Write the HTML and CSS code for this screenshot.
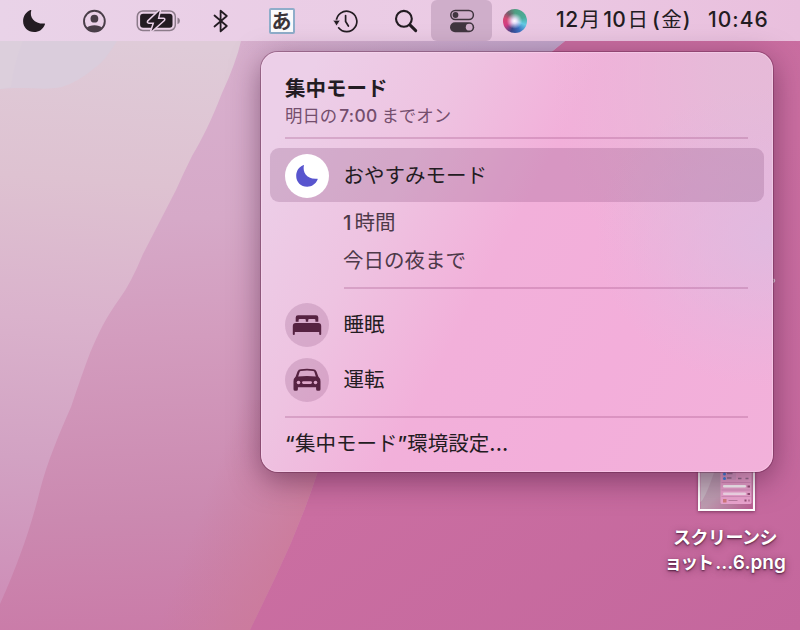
FILE: index.html
```html
<!DOCTYPE html>
<html lang="ja">
<head>
    <meta charset="UTF-8">

    <title>集中モード</title>

    <link rel="stylesheet" href="styles.css">
</head>
<body>
    <div id="desktop">
        <svg class="wallpaper" width="800" height="630" viewBox="0 0 800 630">
            <defs>
                <linearGradient id="base" x1="0" y1="0" x2="1" y2="1">
                    <stop offset="0" stop-color="#c56b9e"/>
                    <stop offset=".6" stop-color="#ca6ea1"/>
                    <stop offset="1" stop-color="#c4679d"/>
                </linearGradient>
                <linearGradient id="mid" gradientUnits="userSpaceOnUse" x1="200" y1="41" x2="230" y2="630">
                    <stop offset="0" stop-color="#d8b0ce"/>
                    <stop offset=".3" stop-color="#d6a9c8"/>
                    <stop offset=".5" stop-color="#d39cbe"/>
                    <stop offset=".8" stop-color="#cb89b0"/>
                    <stop offset="1" stop-color="#ca7ba8"/>
                </linearGradient>
                <linearGradient id="midTop" gradientUnits="userSpaceOnUse" x1="240" y1="0" x2="560" y2="0">
                    <stop offset="0" stop-color="#c0a5ca" stop-opacity="0"/>
                    <stop offset="1" stop-color="#c0a5ca"/>
                </linearGradient>
                <linearGradient id="warm" gradientUnits="userSpaceOnUse" x1="195" y1="525" x2="290" y2="560">
                    <stop offset="0" stop-color="#cc7b9a" stop-opacity="0"/>
                    <stop offset="1" stop-color="#cc7b9a" stop-opacity=".85"/>
                </linearGradient>
                <linearGradient id="left" gradientUnits="userSpaceOnUse" x1="100" y1="41" x2="60" y2="600">
                    <stop offset="0" stop-color="#dfcbd8"/>
                    <stop offset=".25" stop-color="#dec2d1"/>
                    <stop offset=".5" stop-color="#dab2cc"/>
                    <stop offset=".75" stop-color="#d2a2c3"/>
                    <stop offset="1" stop-color="#ce8fb8"/>
                </linearGradient>
            </defs>
            <rect width="800" height="630" fill="url(#base)"/>
            <path fill="url(#mid)" d="M0 0H605L565 41C450 130 370 330 317 474Q300 526 275 578L250 630H0Z"/>
            <path fill="url(#warm)" d="M0 400H344L317 474Q300 526 275 578L250 630H0Z"/>
            <path fill="url(#midTop)" d="M240 0H605L565 41L550 53H240Z"/>
            <path fill="url(#left)" d="M0 0H249L241 41Q236 63 222 93C212 119 202 139 192 156Q184 172 176 190L143 254Q131 283 120 298C105 319 99 332 90 353Q82 374 71 407C60 432 47 462 40 490C31 527 18 564 0 604Z"/>
            <path fill="#dacddc" d="M0 0H150L117 41Q105 61 96 67Q78 82 62 87C43 91 25 86 0 89Z"/>
            <path fill="#dccfdc" d="M0 0H26L23 41Q14 63 11 87L0 89Z"/>
        </svg>

        <div class="menubar">
            <span class="item">
                <svg width="24" height="24" viewBox="0 0 24 24"><path fill="#231c22" d="M9.3 1.2C7.2 8.400 12.200 15 22.600 14.600C23 14.600 23.100 15 22.900 15.400C20.900 20.400 17 23 12.200 23C5.900 23 1.100 18.300 1.100 12.200C1.100 7.100 4.200 2.800 8.500 1.100C9 .9 9.400 .8 9.300 1.200Z"/></svg>
            </span>
            <span class="item">
                <svg width="24" height="24" viewBox="0 0 24 24">
                    <circle cx="12.400" cy="12.200" r="10.400" fill="none" stroke="#493e48" stroke-width="1.900"/>
                    <circle cx="12.400" cy="9.700" r="3.900" fill="#493e48"/>
                    <path fill="#493e48" d="M4.700 18.800C7.200 15.300 17.600 15.300 20.100 18.800C16.700 23.700 8.100 23.700 4.700 18.800Z"/>
                </svg>
            </span>
            <span class="item">
                <svg width="44" height="24" viewBox="0 0 44 24">
                    <rect x="1.300" y="2" width="38" height="19.500" rx="5.500" fill="none" stroke="#8c7b8a" stroke-width="1.500"/>
                    <rect x="4.100" y="4.800" width="32.400" height="13.900" rx="3" fill="#231c22"/>
                    <path fill="#8c7b8a" d="M41.500 8.500Q44 9.500 44 11.800T41.500 15.200Z"/>
                    <path fill="#231c22" stroke="#e9d0e7" stroke-width="3" stroke-linejoin="round" paint-order="stroke" d="M23.700 1.500L12.300 12.400Q11.800 13.400 12.800 13.400H18.300L15.500 22L27.900 10.900Q28.400 9.900 27.400 9.900H21.700Z"/>
                </svg>
            </span>
            <span class="item">
                <svg width="16" height="24" viewBox="0 0 16 24"><path fill="none" stroke="#231c22" stroke-width="1.800" stroke-linejoin="round" stroke-linecap="round" d="M1.500 6.500L13.800 17L7.600 22.300V1.700L13.800 7L1.500 17.500"/></svg>
            </span>
            <span class="item"><span class="ime">あ</span></span>
            <span class="item">
                <svg width="26" height="24" viewBox="0 0 26 24">
                    <path fill="none" stroke="#231c22" stroke-width="1.700" stroke-linecap="round" d="M3.400 12.300A10.200 10.200 0 1 1 5.600 18.800M12.600 6.500V12.500L15.400 17"/>
                    <path fill="#231c22" stroke="#e9cde5" stroke-width=".8" d="M.5 11.200Q-.2 11.200 .4 12L3 16.200Q3.600 16.800 4.100 16.200L6.800 12Q7.300 11.200 6.600 11.200Z"/>
                </svg>
            </span>
            <span class="item">
                <svg width="24" height="24" viewBox="0 0 24 24">
                    <circle cx="9.900" cy="9.800" r="7.900" fill="none" stroke="#231c22" stroke-width="2.100"/>
                    <path stroke="#231c22" stroke-width="3" stroke-linecap="round" d="M15.900 15.900L21.700 21.600"/>
                </svg>
            </span>
            <span class="item item-active">
                <svg width="26" height="24" viewBox="0 0 26 24">
                    <rect x="1.800" y="1.500" width="22.600" height="8.900" rx="4.450" fill="none" stroke="#40353f" stroke-width="1.500"/>
                    <circle cx="6.500" cy="6" r="2.900" fill="#40353f"/>
                    <rect x="1" y="13.200" width="24.200" height="10" rx="5" fill="#40353f"/>
                    <circle cx="20.200" cy="18.200" r="3.400" fill="#cfaeca"/>
                </svg>
            </span>
            <span class="item"><span class="siri"></span></span>
            <span class="date">12<i>月</i>10<i>日</i><b>(</b><i>金</i>)</span>
            <span class="time">10:46</span>
        </div>

        <div class="file">
            <div class="thumb">
                <svg width="53" height="42" viewBox="0 0 52 42">
                    <defs>
                        <linearGradient id="thumbBg" x1="0" y1="0" x2="1" y2="1">
                            <stop offset="0" stop-color="#b7a8b4"/>
                            <stop offset=".5" stop-color="#bd9bb0"/>
                            <stop offset="1" stop-color="#ba5b91"/>
                        </linearGradient>
                    </defs>
                    <rect width="52" height="42" fill="url(#thumbBg)"/>
                    <path fill="#c6b5c1" d="M0 0H15Q8 22 2 32L0 34Z"/>
                    <rect x="20" width="31" height="36" rx="1.500" fill="#eba5cf"/>
                    <rect x="21.500" width="14" height="12" rx="1" fill="#dba2ca"/>
                    <circle cx="24" cy="6" r="1.500" fill="#3585ea"/>
                    <circle cx="24" cy="10.500" r="1.500" fill="#3585ea"/>
                    <path stroke="#95718f" stroke-width="1.500" d="M26.500 5.500H32M26.500 10H31M37.500 10.500H41M45 10.500H48"/>
                    <path stroke="#d68fbc" d="M21 14.500H50M21 22H50M21 28.500H50"/>
                    <rect x="22.500" y="17" width="23" height="2.500" rx="1" fill="#fff"/>
                    <rect x="22.500" y="24.500" width="23" height="2.500" rx="1" fill="#f7dfee"/>
                    <path stroke="#945077" stroke-width="2" d="M47 18.500H49.500M47 26H49.500M44 32.500H46M48 32.500H49"/>
                    <rect x="22.500" y="31" width="3.500" height="3.500" fill="#d17b7d"/>
                    <path stroke="#b97ba0" d="M28 32.500H37"/>
                </svg>
            </div>
            <div class="file-name">
                <div class="line1">スクリーンシ</div>
                <div class="line2">ョット<span>...6.png</span></div>
            </div>
        </div>
        <svg class="peek" width="5" height="7" viewBox="0 0 5 7"><path fill="none" stroke="#e8dce5" stroke-width="1.400" d="M0 1.500H3Q4.300 3 2 4.500L0 5.500"/></svg>

        <div class="popover">
            <div class="heading">
                <div class="title">集中モード</div>
                <div class="sub">明日の<span>7:00</span>までオン</div>
            </div>
            <hr>
            <div class="row row-selected">
                <span class="icon icon-on">
                    <svg width="22" height="22" viewBox="0 0 22 22"><path fill="#5855ce" d="M7.900 .3C6.500 7.300 10.500 14.500 20.900 13.800C21.700 13.700 21.900 14 21.500 14.800C19.600 19.200 15.800 21.700 11.200 21.700C4.900 21.700 .2 17.200 .2 11C.2 6 3 1.900 7.100 .3C7.600 .1 8 0 7.900 .3Z"/></svg>
                </span>
                <span class="label">おやすみモード</span>
            </div>
            <div class="options">
                <div class="option"><span>1</span>時間</div>
                <div class="option">今日の夜まで</div>
                <hr>
            </div>
            <div class="row">
                <span class="icon">
                    <svg width="30" height="22" viewBox="0 0 30 22"><path fill="#552241" d="M3.700 7.800V3.500Q3.700 1.200 6 1.200H24Q26.300 1.200 26.300 3.500V7.800H23.400V6Q23.400 5 22.400 5H17.200Q16.200 5 16.200 6V7.800H13.800V6Q13.800 5 12.800 5H7.600Q6.600 5 6.600 6V7.800ZM.8 20.200V12Q.8 9 3.800 9H26.200Q29.200 9 29.200 12V20.200Q29.200 21 28.200 21T27.200 20.200V18H2.800V20.200Q2.800 21 1.800 21T.8 20.200Z"/></svg>
                </span>
                <span class="label">睡眠</span>
            </div>
            <div class="row">
                <span class="icon">
                    <svg width="28" height="24" viewBox="0 0 28 24">
                        <path fill="#552241" fill-rule="evenodd" d="M4.500 3.500Q5.500 1.300 7.800 1.200Q14 .5 20.200 1.200Q22.500 1.300 23.500 3.500L25.300 8.600Q27.500 10.500 27.500 13.500V21.200Q27.500 22.800 25.900 22.800H24.700Q23.100 22.800 23.100 21.200V19.200H4.900V21.200Q4.900 22.800 3.300 22.800H2.100Q.5 22.800 .5 21.200V13.500Q.5 10.500 2.700 8.600ZM5.200 8.500Q14 7.700 22.800 8.500L21.300 3.800Q21 3 20.100 2.900Q14 2.300 7.900 2.900Q7 3 6.700 3.800Z"/>
                        <circle cx="5.500" cy="14.500" r="1.800" fill="#dca6c8"/>
                        <circle cx="22.500" cy="14.500" r="1.800" fill="#dca6c8"/>
                        <rect x="9" y="13.200" width="10" height="2.800" rx="1.400" fill="#dca6c8"/>
                    </svg>
                </span>
                <span class="label">運転</span>
            </div>
            <hr>
            <div class="prefs"><span>“</span>集中モード<span>”</span>環境設定<span>...</span></div>
        </div>
    </div>
</body>
</html>
```
FILE: styles.css
```css
html,body{
    width: 100%;
    height: 100%;
    margin: 0;
}
body{
    font-family: Inter, "Noto Sans CJK JP", sans-serif;
    color: #231c22;
}
#desktop{
    position: relative;
    width: 800px;
    height: 630px;
    overflow: hidden;
}
.wallpaper{
    position: absolute;
    top: 0;
    left: 0;
}

/* menu bar */
.menubar{
    position: relative;
    display: grid;
    grid-template-columns: 60px 60px 67px 60px 61px 68px 51px 61px 46px 170px 70px;
    box-sizing: border-box;
    height: 41px;
    padding-left: 4px;
    background: linear-gradient(90deg,#e9d3e8,#ebcae4 60%,#e9bfdd);
    font-size: 21px;
    font-weight: 500;
    line-height: 40px;
    white-space: nowrap;
}
.item{
    display: flex;
    align-items: center;
    justify-content: center;
}
.item-active{
    border-radius: 6px;
    background-color: #cfaeca;
}
.ime{
    width: 22px;
    height: 22px;
    border: 2px solid #8fadca;
    border-radius: 2px;
    background-color: #fbfafc;
    color: #3b3439;
    font: bold 20px/21px "Noto Sans CJK JP", sans-serif;
    text-align: center;
}
.siri{
    width: 24px;
    height: 24px;
    border-radius: 50%;
    background:
        radial-gradient(circle at 48% 50%,#fff 0,rgba(240,230,255,.9) 14%,rgba(255,255,255,0) 45%),
        conic-gradient(#4f9f83,#49ad9b 70deg,#64c9e4 110deg,#3a6ec0 155deg,#38458b 200deg,#d23c83 245deg,#d54773 285deg,#725f6c 320deg,#4f9f83);
}
.date{
    padding-left: 18px;
    letter-spacing: .5px;
}
.date i{
    margin: 0 3px 0 1px;
    font-style: normal;
    font-weight: 400;
    font-size: 20.500px;
    letter-spacing: 0;
}
.date i:last-of-type{
    margin-right: 1px;
}
.date b{
    padding-left: 1px;
    font-weight: 500;
}
.time{
    letter-spacing: 1px;
}

/* desktop file */
.file{
    position: absolute;
    top: 468px;
    left: 656px;
    width: 140px;
}
.thumb{
    width: 53px;
    height: 41px;
    margin-left: 42px;
    border: 2px solid #fff;
    border-top: 0;
    overflow: hidden;
    box-shadow: 0 1px 3px rgba(60,10,40,.5);
}
.thumb svg{
    display: block;
}
.file-name{
    padding-top: 14px;
    margin-left: -2px;
    color: #fff;
    font-size: 18px;
    font-weight: bold;
    line-height: 25px;
    text-align: center;
    text-shadow: 0 1px 2px rgba(50,10,35,.8), 0 2px 7px rgba(60,10,40,.5);
    white-space: nowrap;
}
.line1{
    letter-spacing: -.5px;
}
.line2{
    letter-spacing: -2px;
}
.line2 span{
    padding-left: 3px;
    font-size: 19px;
    font-weight: 600;
    letter-spacing: 0;
}
.peek{
    position: absolute;
    top: 278px;
    left: 771px;
}

/* focus popover */
.popover{
    position: absolute;
    top: 52px;
    left: 261px;
    box-sizing: border-box;
    width: 512px;
    height: 420px;
    padding: 24px 9px 0;
    border-radius: 17px;
    background:
        radial-gradient(ellipse 170px 150px at 505px 185px,rgba(224,186,224,.9),rgba(224,186,224,0)),
        radial-gradient(ellipse 210px 250px at 500px 20px,rgba(229,187,216,.9) 20%,rgba(229,187,216,0)),
        linear-gradient(118deg,#eccfe8 8%,#eec3e1 28%,#f2b0da 47%,#f3aeda 70%,#f2b1da);
    box-shadow: inset 0 0 0 1px rgba(255,225,245,.4), 0 0 0 1px rgba(95,30,70,.4), 0 8px 30px rgba(60,15,50,.5);
}
.popover hr{
    height: 2px;
    margin: 0 16px 0 15px;
    border: 0;
    background-color: rgba(150,70,125,.26);
}
.heading{
    height: 61px;
    padding-left: 15px;
}
.title{
    font-size: 20.500px;
    font-weight: bold;
    line-height: 25px;
}
.sub{
    color: #744e6d;
    font-size: 17.400px;
    line-height: 29px;
}
.sub span{
    margin: 0 4px 0 2px;
    font-size: 17.400px;
    font-weight: 500;
    letter-spacing: .3px;
}
.row{
    display: flex;
    align-items: center;
    gap: 14px;
    height: 55px;
    padding-left: 15px;
}
.row-selected{
    height: 54px;
    margin-top: 9px;
    border-radius: 9px;
    background-color: rgba(110,50,100,.2);
}
.row-selected .icon{
    margin-top: 1px;
}
.icon{
    display: flex;
    align-items: center;
    justify-content: center;
    width: 44px;
    height: 44px;
    border-radius: 50%;
    background-color: rgba(110,50,100,.18);
}
.icon-on{
    background-color: #fff;
}
.label,.option,.prefs{
    font-size: 20.500px;
    line-height: 30px;
}
.row-selected .label{
    padding-top: 2px;
}
.options{
    box-sizing: border-box;
    height: 95px;
    padding: 2px 0 0 73px;
    color: #4d3949;
}
.popover .options hr{
    margin: 7px 16px 0 1px;
}
.option{
    height: 38px;
    line-height: 38px;
}
.option span{
    margin-right: 3px;
    font-weight: 500;
}
.row .label{
    margin-left: .5px;
}
.row + hr{
    margin-top: 9px;
}
.popover .row + hr{
    margin-top: 9px;
}
.heading + hr + .row{
    margin-top: 9px;
}
.prefs{
    padding: 11px 0 0 15px;
}
.prefs span{
    font-weight: 500;
    letter-spacing: .2px;
}
```
